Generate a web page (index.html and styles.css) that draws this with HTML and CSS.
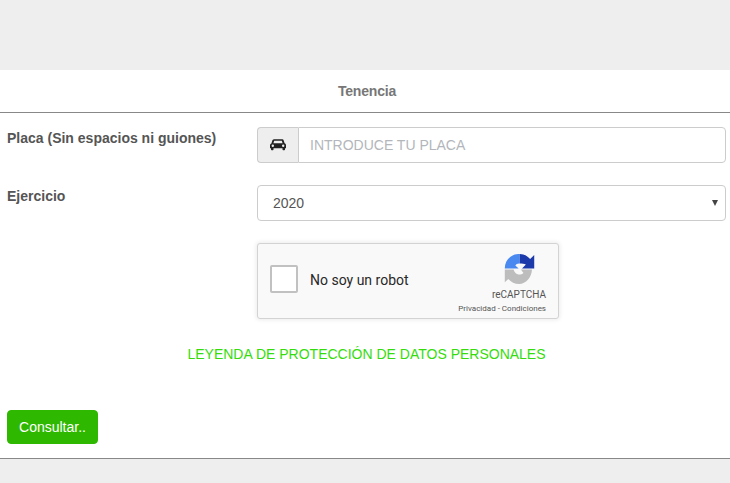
FILE: index.html
```html
<!DOCTYPE html>
<html lang="es">
<head>
<meta charset="utf-8">
<title>Tenencia</title>
<link rel="stylesheet" href="styles.css">
</head>
<body>
<main class="panel">
  <h1 class="panel-title">Tenencia</h1>
  <form class="form">
    <div class="row">
      <label class="label" for="placa">Placa (Sin espacios ni guiones)</label>
      <div class="input-group">
        <span class="addon">
          <svg class="car" viewBox="0 0 16 12" width="16" height="12" aria-hidden="true"><path fill="#222" fill-rule="evenodd" d="M3.6 0.3h8.8c.6 0 1 .3 1.2.9l1 3.1c.8.3 1.400 1 1.400 1.900v3H15v1.300c0 .4-.3.700-.7.700h-1.100c-.4 0-.7-.3-.7-.7V9.300H3.500v1.200c0 .4-.3.700-.7.700H1.700c-.4 0-.7-.3-.7-.7V9.300H0v-3c0-.9.600-1.600 1.400-1.900l1-3.100c.2-.6.600-.9 1.200-.9zM4.200 1.800 3.400 4.300h9.200l-.8-2.500zM2.800 5.500a1.200 1.200 0 1 0 0 2.400 1.200 1.200 0 0 0 0-2.400zM13.200 5.500a1.200 1.200 0 1 0 0 2.400 1.200 1.200 0 0 0 0-2.400z"/></svg>
        </span>
        <input class="control" id="placa" type="text" placeholder="INTRODUCE TU PLACA">
      </div>
    </div>
    <div class="row">
      <label class="label" for="ejercicio">Ejercicio</label>
      <div class="select-wrap">
        <select class="select" id="ejercicio"><option>2020</option></select>
      </div>
    </div>
    <div class="row">
      <span></span>
      <div class="captcha">
        <span class="check"></span>
        <span class="captcha-text">No soy un robot</span>
        <div class="brand">
          <svg class="logo" viewBox="3 2.5 26.500 27" width="31" height="30" aria-hidden="true">
            <path fill="#4a8af0" d="M3 15.500C3 8 9 2.500 15 2.500H16.500V11C14.500 10.800 13.300 11.500 12.500 12.800L15.500 15.500H3Z"/>
            <path fill="#1c3aa9" d="M16.500 2.500C20 2.500 23.500 4.200 25.800 7L29.500 3.500V15.500H18.500L22 12C20.500 11 18.500 11 16.500 11Z"/>
            <path fill="#bdbdbd" d="M3 16.500H11C11.500 19 13.500 21 16 21C17.500 21 18.700 20.500 19.800 19.500L17.500 16.500H27.500C27 24 22 29.500 16 29.500C12 29.500 8.500 27.800 6.200 25L3 28Z"/>
          </svg>
          <span class="brand-name">reCAPTCHA</span>
          <span class="brand-links">Privacidad - Condiciones</span>
        </div>
      </div>
    </div>
    <p class="legend">LEYENDA DE PROTECCIÓN DE DATOS PERSONALES</p>
    <button class="submit" type="button">Consultar..</button>
  </form>
</main>
</body>
</html>
```
FILE: styles.css
```css
* { box-sizing: border-box; }
html, body { height: 100%; }
body {
  margin: 0;
  padding-top: 70px;
  background: #eeeeee;
  font-family: "Liberation Sans", Arial, sans-serif;
  font-size: 14px;
  color: #555;
  overflow: hidden;
}
.panel {
  background: #fff;
  height: 389px;
  border-bottom: 1px solid #888;
}
.panel-title {
  margin: 0;
  height: 43px;
  padding-left: 4px;
  border-bottom: 1px solid #888;
  font-size: 14px;
  font-weight: bold;
  letter-spacing: -0.2px;
  line-height: 42px;
  text-align: center;
  color: #777;
}
.form { padding: 14px 4px 0 7px; }
.row {
  display: grid;
  grid-template-columns: 250px 469px;
  margin-bottom: 22px;
}
.label {
  font-weight: bold;
  color: #555;
  line-height: 20px;
  padding-top: 1px;
}
.input-group { display: flex; height: 36px; }
.addon {
  width: 41px;
  display: flex;
  align-items: center;
  justify-content: center;
  background: #eee;
  border: 1px solid #ccc;
  border-right: 0;
  border-radius: 4px 0 0 4px;
}
.control {
  flex: 1;
  min-width: 0;
  padding: 6px 11px;
  border: 1px solid #ccc;
  border-radius: 0 4px 4px 0;
  font: 14px "Liberation Sans", Arial, sans-serif;
  color: #555;
  background: #fff;
}
.control::placeholder { color: #b3b6bb; opacity: 1; }
.select-wrap { position: relative; height: 36px; }
.select-wrap::after {
  content: "";
  position: absolute;
  top: 15px;
  right: 8px;
  border-left: 3px solid transparent;
  border-right: 3px solid transparent;
  border-top: 6px solid #444;
  pointer-events: none;
}
.select {
  appearance: none;
  display: block;
  height: 36px;
  width: 100%;
  padding: 6px 12px 6px 15px;
  border: 1px solid #ccc;
  border-radius: 4px;
  background: #fff;
  color: #555;
  font: 14px "Liberation Sans", Arial, sans-serif;
}
.captcha {
  width: 302px;
  height: 76px;
  display: flex;
  align-items: center;
  padding: 0 12px 4px;
  background: #f9f9f9;
  border: 1px solid #d3d3d3;
  border-radius: 3px;
  box-shadow: 0 0 4px 1px rgba(0, 0, 0, 0.08);
}
.check {
  width: 28px;
  height: 28px;
  background: #fff;
  border: 2px solid #c1c1c1;
  border-radius: 2px;
  flex: none;
}
.captcha-text {
  margin: 2px 0 0 12px;
  font-family: Roboto, sans-serif;
  font-size: 14px;
  color: #282828;
}
.brand {
  margin-left: auto;
  align-self: stretch;
  display: flex;
  flex-direction: column;
  align-items: flex-end;
  font-family: Roboto, sans-serif;
  color: #555;
}
.logo { margin: 10px 11px 0 0; flex: none; }
.brand-name { font-size: 10px; line-height: 12px; margin-top: 5px; }
.brand-links { font-size: 8px; line-height: 10px; margin-top: 3px; }
.legend {
  margin: 25px 0 0;
  text-align: center;
  line-height: 20px;
  color: #35dc0c;
}
.submit {
  display: block;
  margin-top: 46px;
  width: 91px;
  height: 34px;
  border: 1px solid #2fb800;
  border-radius: 4px;
  background: #2fb800;
  color: #fff;
  font: 14px "Liberation Sans", Arial, sans-serif;
  padding: 0;
}
```
